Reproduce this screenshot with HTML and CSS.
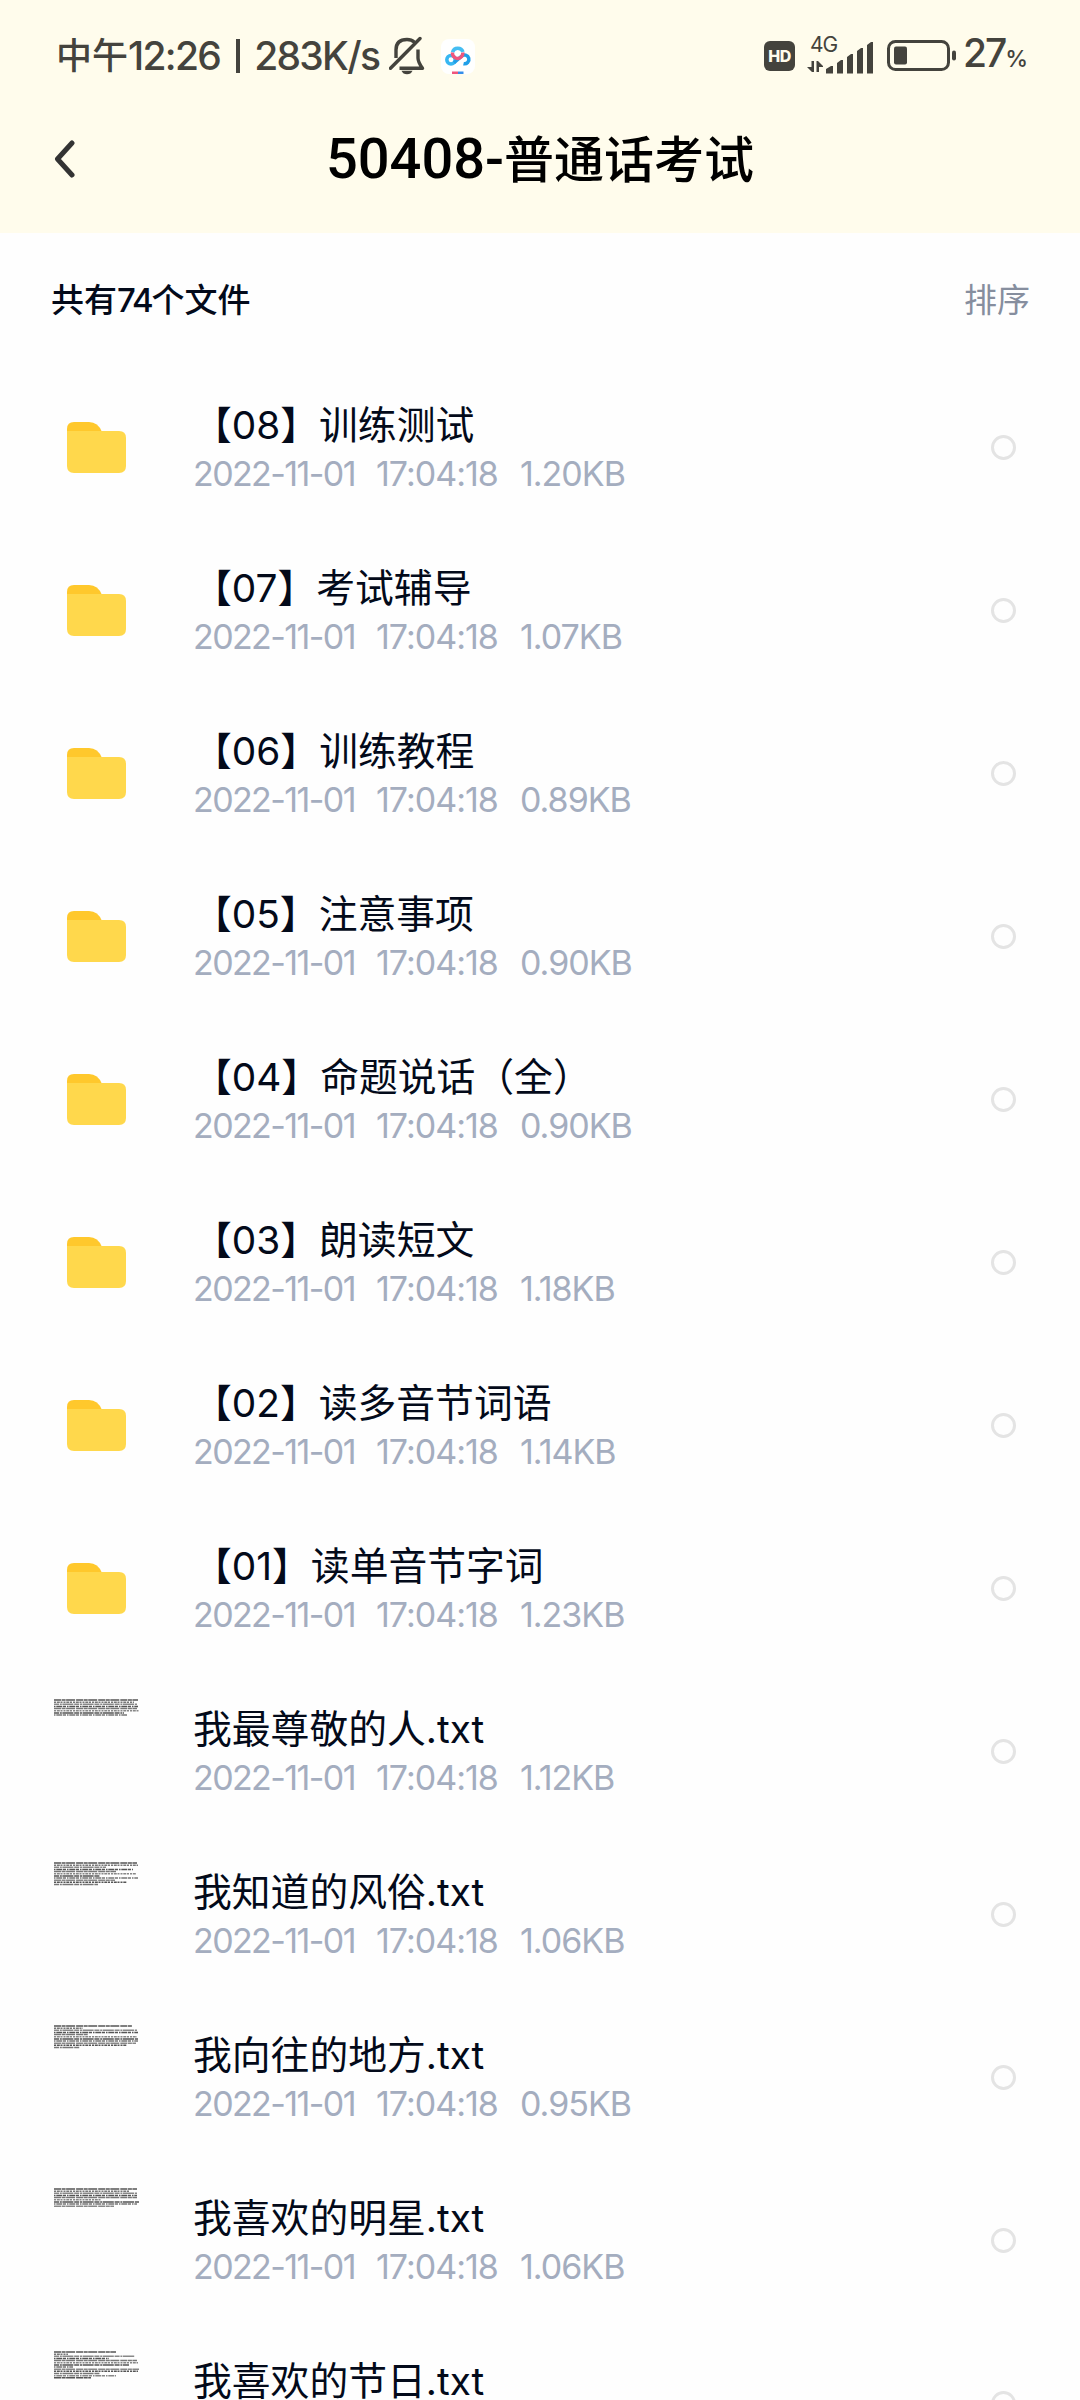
FILE: index.html
```
<!DOCTYPE html>
<html lang="zh-CN">
  <head>
    <meta charset="UTF-8" />
    <meta name="viewport" content="width=device-width, initial-scale=1.0" />
    <title>50408-普通话考试</title>
    <link rel="stylesheet" href="styles.css">
  </head>
  <body>
    <div class="upper">
      <div class="status">
        <span class="clock">中午<span class="clock-num">12:26</span><i class="bar"></i><span class="speed">283K/s</span></span>
        <svg class="bell" width="36" height="40" viewBox="0 0 36 40" fill="none" stroke="#44433d" stroke-width="3.4">
          <path d="M7 22V14C7 7 11 3.500 18 3.500C21 3.500 23.500 4.500 25.500 6.300" />
          <path d="M29 13.500V22Q29 26 33.500 32.300H10.500" stroke-linejoin="round" />
          <path d="M1.500 32.300L31 2.500" stroke-linecap="round" />
          <path d="M12.500 34.800H23.500Q22 38.300 18 38.300T12.500 34.800Z" fill="#44433d" stroke="none" />
        </svg>
        <svg class="cloud" width="34" height="35" viewBox="0 0 34 35" fill="none" stroke-width="3.5">
          <rect width="34" height="35" rx="8" fill="#fff" />
          <path d="M11.500 13.200A5.500 5.500 0 0 1 22 13" stroke="#45bdf2" />
          <circle cx="10" cy="20.800" r="4.200" stroke="#38b7f2" />
          <path d="M13 23.800L20.500 17.200A4.400 4.400 0 1 1 22.500 24.700" stroke="#209fe8" />
          <path d="M11.500 13.500A5.200 5.200 0 1 0 21.800 13.500" stroke="#f0557c" />
          <path d="M11 34H17" stroke="#f0557c" stroke-width="3" />
          <path d="M17 34H22.500" stroke="#348eea" stroke-width="3" />
        </svg>
        <span class="hd">HD</span>
        <div class="network">
          <span class="net-type">4G</span>
          <svg width="68" height="24" viewBox="0 0 68 24" fill="#44433d">
            <path d="M4.500 0H7V11H5L0 6H4.500ZM9.500 0H11L16 5V6H12V11H9.500Z" transform="translate(0 7)" />
          </svg>
          <svg class="signal" width="48" height="32" viewBox="0 0 48 32" fill="#44433d">
            <path d="M0 31.500V27L5 24H7V31.500ZM11 31.500V21L15 18H17V31.500ZM21 31.500V15L25 12H27V31.500ZM31 31.500V9L35 6H37V31.500ZM41 31.500V3L45 0H47V31.500Z" />
          </svg>
        </div>
        <svg class="battery" width="70" height="32" viewBox="0 0 70 32">
          <rect x="1.500" y="1.500" width="60" height="28" rx="7" fill="none" stroke="#44433d" stroke-width="3" />
          <rect x="7" y="6.500" width="13" height="18" rx="2" fill="#44433d" />
          <rect x="65" y="10.500" width="4" height="10" rx="2" fill="#44433d" />
        </svg>
        <span class="percent">27<small>%</small></span>
      </div>
      <header>
        <svg class="back" width="22" height="38" viewBox="0 0 22 38" fill="none" stroke="#333" stroke-width="5" stroke-linecap="round" stroke-linejoin="round">
          <path d="M18 3L3.500 19L18 35" />
        </svg>
        <h1><span>50408-</span>普通话考试</h1>
      </header>
    </div>
    <div class="summary">
      <b>共有<span>74</span>个文件</b>
      <span>排序</span>
    </div>
    <div class="lower"></div>

    <script src="files.js"></script>
  </body>
</html>
```
FILE: styles.css
```
html,
body {
  margin: 0;
  padding: 0;
}
body {
  width: 1080px;
  height: 2400px;
  overflow: hidden;
  background-color: #fefefe;
  font-family: Inter, "Noto Sans CJK SC", sans-serif;
  color: #030a1a;
}
.upper {
  height: 233px;
  background-color: #fffcec;
}
.status {
  display: flex;
  align-items: center;
  box-sizing: border-box;
  height: 112px;
  padding: 0 54px 0 56px;
  color: #44433d;
}
.clock {
  display: flex;
  align-items: center;
  width: 333px;
  font-size: 36px;
  font-weight: 500;
  line-height: 48px;
  white-space: nowrap;
}
.clock-num,
.speed {
  font-size: 39px;
  letter-spacing: -1.7px;
}
.bar {
  width: 4px;
  height: 34px;
  margin: 0 14px 0 16px;
  background-color: #44433d;
}
.cloud {
  margin-left: 16px;
}
.hd {
  margin-left: auto;
  width: 31px;
  height: 30px;
  border-radius: 6px;
  background-color: #44433d;
  color: #fffcec;
  font: 800 16px/30px Inter, sans-serif;
  letter-spacing: -0.5px;
  text-align: center;
}
.network {
  position: relative;
  width: 68px;
  height: 40px;
  margin-left: 12px;
}
.net-type {
  display: block;
  height: 18px;
  padding-left: 3px;
  font-size: 21px;
  line-height: 17px;
  letter-spacing: -1px;
}
.network svg {
  display: block;
}
.network .signal {
  position: absolute;
  left: 19px;
  top: 6px;
}
.battery {
  margin-left: 12px;
}
.percent {
  width: 63px;
  margin-left: 6px;
  font-size: 39px;
  font-weight: 500;
  line-height: 48px;
  letter-spacing: -2px;
  white-space: nowrap;
}
.percent small {
  font-size: 23px;
}
header {
  display: grid;
  grid-template-columns: 76px 1fr 76px;
  align-items: center;
  height: 94px;
}
.back {
  justify-self: end;
}
h1 {
  margin: 0;
  font-size: 50px;
  font-weight: 500;
  line-height: 92px;
  color: #000;
  text-align: center;
}
h1 span {
  font-family: Roboto, sans-serif;
  font-size: 56px;
}
.summary {
  display: flex;
  justify-content: space-between;
  height: 133px;
  padding: 0 50px 0 51px;
  font-size: 33px;
  line-height: 134px;
  color: #868e9e;
}
.summary b {
  font-weight: 500;
  color: #030a1a;
}
.summary b span {
  letter-spacing: -2px;
}
.file {
  display: flex;
  align-items: center;
  height: 163px;
}
.icon {
  flex: none;
  width: 86px;
  height: 104px;
  margin: -1px 54px 0 53px;
}
.info {
  flex: 1;
}
.name {
  height: 52px;
  font-size: 38.8px;
  line-height: 52px;
  white-space: nowrap;
}
.meta {
  display: flex;
  height: 46px;
  font-size: 34px;
  line-height: 46px;
  letter-spacing: -1px;
  color: #a4adbf;
  white-space: nowrap;
}
.date {
  width: 183px;
  letter-spacing: -1.6px;
}
.time {
  width: 144px;
}
.check {
  box-sizing: border-box;
  width: 25px;
  height: 25px;
  margin-right: 64px;
  border: 3px solid #e4e4e4;
  border-radius: 50%;
}
```
FILE: files.js
```
// lines: length of each text line in the preview
const files = [
  { name: "【08】训练测试", size: "1.20KB" },
  { name: "【07】考试辅导", size: "1.07KB" },
  { name: "【06】训练教程", size: "0.89KB" },
  { name: "【05】注意事项", size: "0.90KB" },
  { name: "【04】命题说话（全）", size: "0.90KB" },
  { name: "【03】朗读短文", size: "1.18KB" },
  { name: "【02】读多音节词语", size: "1.14KB" },
  { name: "【01】读单音节字词", size: "1.23KB" },
  { name: "我最尊敬的人.txt", size: "1.12KB", lines: [85, 81, 84, 85, 84, 86, 71, 74] },
  { name: "我知道的风俗.txt", size: "1.06KB", lines: [84, 85, 53, 80, 63, 83, 47, 85, 62, 74, 45] },
  { name: "我向往的地方.txt", size: "0.95KB", lines: [79, 30, 84, 85, 35, 84, 85, 85, 83, 74, 27] },
  { name: "我喜欢的明星.txt", size: "1.06KB", lines: [84, 77, 84, 84, 84, 48, 86, 84, 61] },
  { name: "我喜欢的节日.txt", lines: [63, 15, 82, 56, 84, 85, 76, 20, 86, 85, 47, 63, 38] },
];
const lowerEl = document.querySelector(".lower");

const folder = `<svg class="icon" viewBox="0 0 86 104">
  <path d="M14 44V34Q14 27 21 27H36Q45 27 49 37V44Z" fill="#ffc82c" />
  <path d="M14 36H66Q73 36 73 43V71Q73 78 66 78H21Q14 78 14 71Z" fill="#ffd84c" />
</svg>`;

const preview = (file) => {
  const dashes = ["7 .6 4 .5 9 1", "2 .8 3 .7 2 1", "5 .8 2 .6 11 .8", "1.5 .8 6 .7 3 1"];
  const colors = ["#555", "#777", "#888"];
  const rows = file.lines.map((width, i) => {
    const y = 1 + i * 2.15;
    return `<path d="M1 ${y}H${width}" stroke="${colors[i % 3]}" stroke-width="1.5" stroke-dasharray="${dashes[i % 4]}" />`;
  });
  return `<svg class="icon" viewBox="0 0 86 104">${rows.join("")}</svg>`;
};

files.forEach((file) => {
  const newEl = document.createElement("div");
  newEl.className = "file";
  const meta = file.size
    ? `<span class="date">2022-11-01</span><span class="time">17:04:18</span><span>${file.size}</span>`
    : "";
  newEl.innerHTML = `${file.lines ? preview(file) : folder}
    <div class="info">
      <div class="name">${file.name}</div>
      <div class="meta">${meta}</div>
    </div>
    <div class="check"></div>`;
  lowerEl.appendChild(newEl);
});
```
